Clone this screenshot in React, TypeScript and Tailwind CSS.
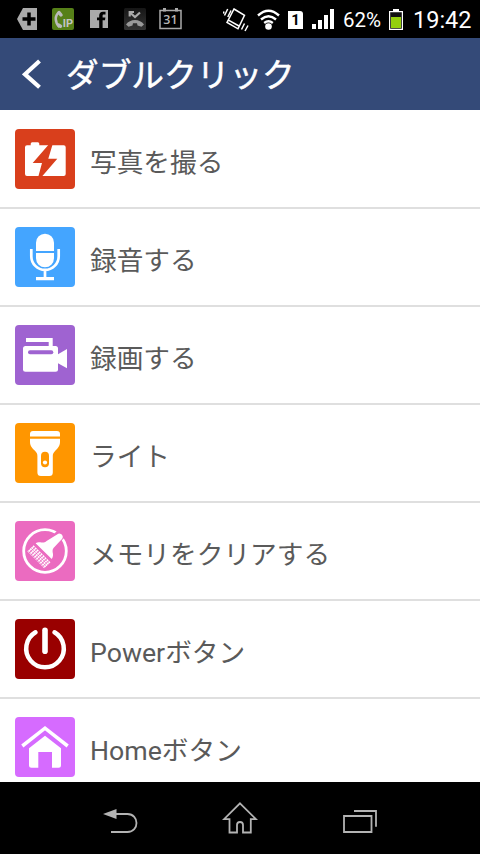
import type { ReactNode } from "react";

const textFont = "font-['Roboto','Noto_Sans_CJK_JP',sans-serif]";

function IconCamera() {
  return (
    <>
      <path
        fill="#fff"
        d="M12 16.3h3.7v-1.5q0-1.5 1.5-1.5h5.6q1.5 0 1.5 1.5v1.5h24.4q2 0 2 2V45q0 2-2 2H12q-2 0-2-2V18.3q0-2 2-2z"
      />
      <path
        fill="#d93f1c"
        d="M33.3 16 17.7 34H27l-3.6 13.3h3.8l15.1-17.6h-9L37.4 16z"
      />
    </>
  );
}

function IconMic() {
  return (
    <>
      <path
        fill="#fff"
        d="M21 24v-8.3a9 9 0 0 1 18 0V24zM21 26h18v5.3a9 9 0 0 1-18 0zM21 50h18v3.2H21z"
      />
      <path
        fill="none"
        stroke="#fff"
        strokeWidth="2.7"
        d="M16.3 22v7.2a13.7 13.7 0 0 0 27.4 0V22M30 42.5V51"
      />
    </>
  );
}

function IconVideo() {
  return (
    <>
      <path fill="#fff" d="M11 13h26.7v9h-4v-5H11z" />
      <rect x="8" y="21" width="35" height="25.7" rx="2.5" fill="#fff" />
      <rect x="13" y="25.3" width="25.3" height="4" rx="2" fill="#9f63d1" />
      <path fill="#fff" d="m43 29.3 9-5.3v19.3l-9-5z" />
    </>
  );
}

function IconTorch() {
  return (
    <>
      <path
        fill="#fff"
        d="M15 13.5V11q0-3 3-3h24q3 0 3 3v2.5zM15 15.8h30V19c0 4-2.5 6.5-4.5 8.5S37.8 31 37.8 33v16.5q0 3.5-3.5 3.5h-8.400q-3.500 0-3.500-3.500V33c0-2-.6-3.500-2.700-5.500S15 23 15 19z"
      />
      <rect x="26" y="28.7" width="8" height="15.5" rx="4" fill="#ff9600" />
      <circle cx="30" cy="39.5" r="2.1" fill="#fff" />
    </>
  );
}

function IconBrush() {
  return (
    <>
      <circle
        cx="30"
        cy="30"
        r="21.3"
        fill="none"
        stroke="#fff"
        strokeWidth="2.8"
      />
      <path stroke="#eb6bc0" strokeWidth="10" d="m40 19 10-10" />
      <path
        fill="#fff"
        d="M42.500 13.300c2.500-2.500 7 1.900 4.700 4.400L38.500 27c-1.500 2-.8 4-.5 6 .2 2-.4 3.700-1.300 4.900L20.600 22.200c2-1.400 4-.9 6-.7 2 .2 3.600-.3 5-1.500z"
      />
      <g stroke="#fff" strokeWidth="1.9" strokeDasharray="1.600 0.400">
        <path d="m19.300 25-6.300 6M21.300 27 15 33M23.200 28.900l-6.300 6M25.200 30.900l-6.300 6M27.100 32.800l-6.300 6M29.100 34.800l-6.300 6M31 36.700l-6.300 6M33 38.700l-6.300 6M34.800 40.600l-6.300 6" />
      </g>
    </>
  );
}

function IconPower() {
  return (
    <g fill="none" stroke="#fff" strokeLinecap="round">
      <path strokeWidth="4.5" d="M20.500 13.300a18.800 18.800 0 1 0 19 0" />
      <path strokeWidth="5.6" d="M30 11.200v21" />
    </g>
  );
}

function IconHouse() {
  return (
    <>
      <path
        fill="none"
        stroke="#fff"
        strokeWidth="3.5"
        d="M7.300 29 30 11.200 52.700 29"
      />
      <path
        fill="#fff"
        d="m30 18.700 16 12.600v17q0 2.500-2.500 2.500H37V35H23.300v15.800h-6.800q-2.500 0-2.500-2.500v-17z"
      />
    </>
  );
}

interface Action {
  label: string;
  color: string;
  icon: ReactNode;
}

const actions: Action[] = [
  { label: "写真を撮る", color: "bg-[#d93f1c]", icon: <IconCamera /> },
  { label: "録音する", color: "bg-[#44a5ff]", icon: <IconMic /> },
  { label: "録画する", color: "bg-[#9f63d1]", icon: <IconVideo /> },
  { label: "ライト", color: "bg-[#ff9600]", icon: <IconTorch /> },
  { label: "メモリをクリアする", color: "bg-[#eb6bc0]", icon: <IconBrush /> },
  { label: "Powerボタン", color: "bg-[#990000]", icon: <IconPower /> },
  { label: "Homeボタン", color: "bg-[#d66bff]", icon: <IconHouse /> },
];

function StatusBar() {
  return (
    <div className="flex h-[38px] shrink-0 items-center bg-black text-white">
      <svg className="ml-[17px] shrink-0" width="20" height="22">
        <path fill="#aaa" d="M0 11 6 0h14v22H6z" />
        <path stroke="#000" strokeWidth="3.5" d="M12 4.500v13M5.500 11h13" />
      </svg>
      <div className="relative ml-[15px] h-[22px] w-[22px] shrink-0 rounded-[2px] bg-[#568018]">
        <svg width="22" height="22">
          <path
            fill="none"
            stroke="#bbb"
            strokeWidth="2.5"
            d="M7.500 4C2.500 7.500 2.500 14 7.500 19"
          />
          <path
            stroke="#bbb"
            strokeWidth="3.5"
            strokeLinecap="round"
            d="m7 4.500 2 2.500M6.500 17l2 1.200"
          />
        </svg>
        <span
          className={`${textFont} absolute right-px bottom-0.5 text-[11px] leading-[9px] font-bold text-[#c4c4c4]`}
        >
          IP
        </span>
      </div>
      <svg className="ml-4 shrink-0" width="18" height="18">
        <path fill="#aaa" d="M0 0h18v18H0z" />
        <path
          fill="#000"
          d="M9.200 18v-7.700H7V7.400h2.200V5.600C9.200 3 10.600 1.700 13 1.700h2.500v2.900h-1.700c-.8 0-1.200.4-1.200 1.200v1.600h2.800l-.4 2.900h-2.400V18z"
        />
      </svg>
      <svg className="ml-4 shrink-0" width="22" height="22">
        <defs>
          <linearGradient id="missed" x2="0" y2="1">
            <stop offset="0" stopColor="#161616" />
            <stop offset="1" stopColor="#343434" />
          </linearGradient>
        </defs>
        <rect width="22" height="22" rx="1.5" fill="url(#missed)" />
        <path
          fill="none"
          stroke="#aaa"
          strokeWidth="2.2"
          d="m6 4.500 5 4.500 5-4.500M5.700 8.500V4H10"
        />
        <path
          fill="#999"
          d="M2 16.500c4-6 14-6 18 0l-2.500 2.300-4-1.300-.5-2.300h-4l-.5 2.300-4 1.300z"
        />
      </svg>
      <svg className="ml-[13px] shrink-0" width="23" height="22">
        <path
          fill="none"
          stroke="#aaa"
          strokeWidth="1.5"
          d="M1 2.500h21v18H1z"
        />
        <path fill="#aaa" d="M4 0h3v3.500H4zM16 0h3v3.500h-3z" />
        <text
          x="11.5"
          y="16"
          fill="#b5b5b5"
          fontSize="12.5"
          fontWeight="600"
          textAnchor="middle"
          fontFamily="Open Sans, sans-serif"
        >
          31
        </text>
      </svg>
      <svg
        className="mt-px ml-[41px] shrink-0"
        width="26"
        height="24"
        fill="none"
        stroke="#fff"
        strokeWidth="1.5"
      >
        <path d="m11 1 10.500 6.300-6.500 13.500L4 14.500zM5 11.800l11 6.200" />
        <path d="M1.500 7.500 4.700 1M4.800 9 8 2.500M1 3.500l-.6 2M18.500 21.500l3-6M22 23l3-5.500" />
      </svg>
      <svg className="ml-2 shrink-0" width="23" height="21">
        <path
          fill="none"
          stroke="#fff"
          strokeWidth="2.4"
          d="M1 6.500q10.500-9.500 21 0M4 10.500q7.500-6.500 15 0M7.200 14q4.300-3.300 8.600 0"
        />
        <circle cx="11.5" cy="17.5" r="3.3" fill="#fff" />
      </svg>
      <div
        className={`${textFont} mt-0.5 ml-2 flex h-[18px] w-[15px] shrink-0 items-center justify-center rounded-tr-[3px] bg-white text-[15px] leading-none font-bold text-black`}
      >
        1
      </div>
      <svg className="ml-[9px] shrink-0" width="23" height="20" fill="#fff">
        <path d="M0 15h4v5H0zM6 11h4v9H6zM12 6h4v14h-4zM18 0h4v20h-4z" />
      </svg>
      <span
        className={`${textFont} mt-0.5 ml-2 w-[42px] shrink-0 text-[20.500px] leading-6 whitespace-nowrap`}
      >
        62%
      </span>
      <svg className="ml-1 shrink-0" width="14" height="21">
        <path fill="#fff" d="M4 0h6v3H4z" />
        <path
          fill="#111"
          stroke="#fff"
          strokeWidth="1.2"
          d="M.6 2.600h12.800v17.800H.6z"
        />
        <path fill="#94cf0c" d="M2 8h10v11H2z" />
      </svg>
      <span
        className={`${textFont} mt-0.5 ml-[10px] text-[23.500px] leading-7 whitespace-nowrap`}
      >
        19:42
      </span>
    </div>
  );
}

function NavBar() {
  return (
    <div className="flex h-[72px] shrink-0 items-start bg-black pt-[18px]">
      <svg className="ml-[103px]" width="36" height="36">
        <path fill="#b3b3b3" d="m0 14 13.500-5v10z" />
        <path
          fill="none"
          stroke="#b3b3b3"
          strokeWidth="1.8"
          d="M13 14h11.500c12 0 12 18 0 18H8"
        />
      </svg>
      <svg className="ml-[83px]" width="36" height="36">
        <path
          fill="none"
          stroke="#b3b3b3"
          strokeWidth="1.8"
          d="m18 3.300 16 15.900h-5.200v13.300H21V25c0-4-6-4-6 0v7.500H7.500V19.200H2z"
        />
      </svg>
      <svg className="ml-[84px]" width="38" height="36">
        <path
          fill="none"
          stroke="#b3b3b3"
          strokeWidth="1.8"
          d="M2 16h27.500v16H2zM12 11h22v15.700"
        />
      </svg>
    </div>
  );
}

export default function App() {
  return (
    <div className="flex h-[854px] w-[480px] flex-col overflow-hidden bg-white">
      <StatusBar />
      <header className="flex h-[72px] shrink-0 items-center bg-[#344a78] text-white">
        <svg className="ml-[22px] shrink-0" width="20" height="30">
          <path
            fill="none"
            stroke="#fff"
            strokeWidth="4.2"
            d="M17.500 2 3 15.300l14.500 13"
          />
        </svg>
        <h1
          className={`${textFont} mt-[3px] ml-6 text-[32.700px] leading-[48px] font-normal whitespace-nowrap [-webkit-text-stroke:0.5px_white]`}
        >
          ダブルクリック
        </h1>
      </header>
      <ul className="min-h-0 flex-1 overflow-hidden pt-px">
        {actions.map(({ label, color, icon }) => (
          <li
            key={label}
            className="flex h-[98px] items-center border-b-2 border-[#dfdfdf] pl-[15px]"
          >
            <div className={`${color} h-[60px] w-[60px] shrink-0 rounded-[4px]`}>
              <svg width="60" height="60" viewBox="0 0 60 60">
                {icon}
              </svg>
            </div>
            <span
              className={`${textFont} mt-[7px] ml-[15px] text-[26.700px] leading-10 whitespace-nowrap text-[#5a5a5a]`}
            >
              {label}
            </span>
          </li>
        ))}
      </ul>
      <NavBar />
    </div>
  );
}
